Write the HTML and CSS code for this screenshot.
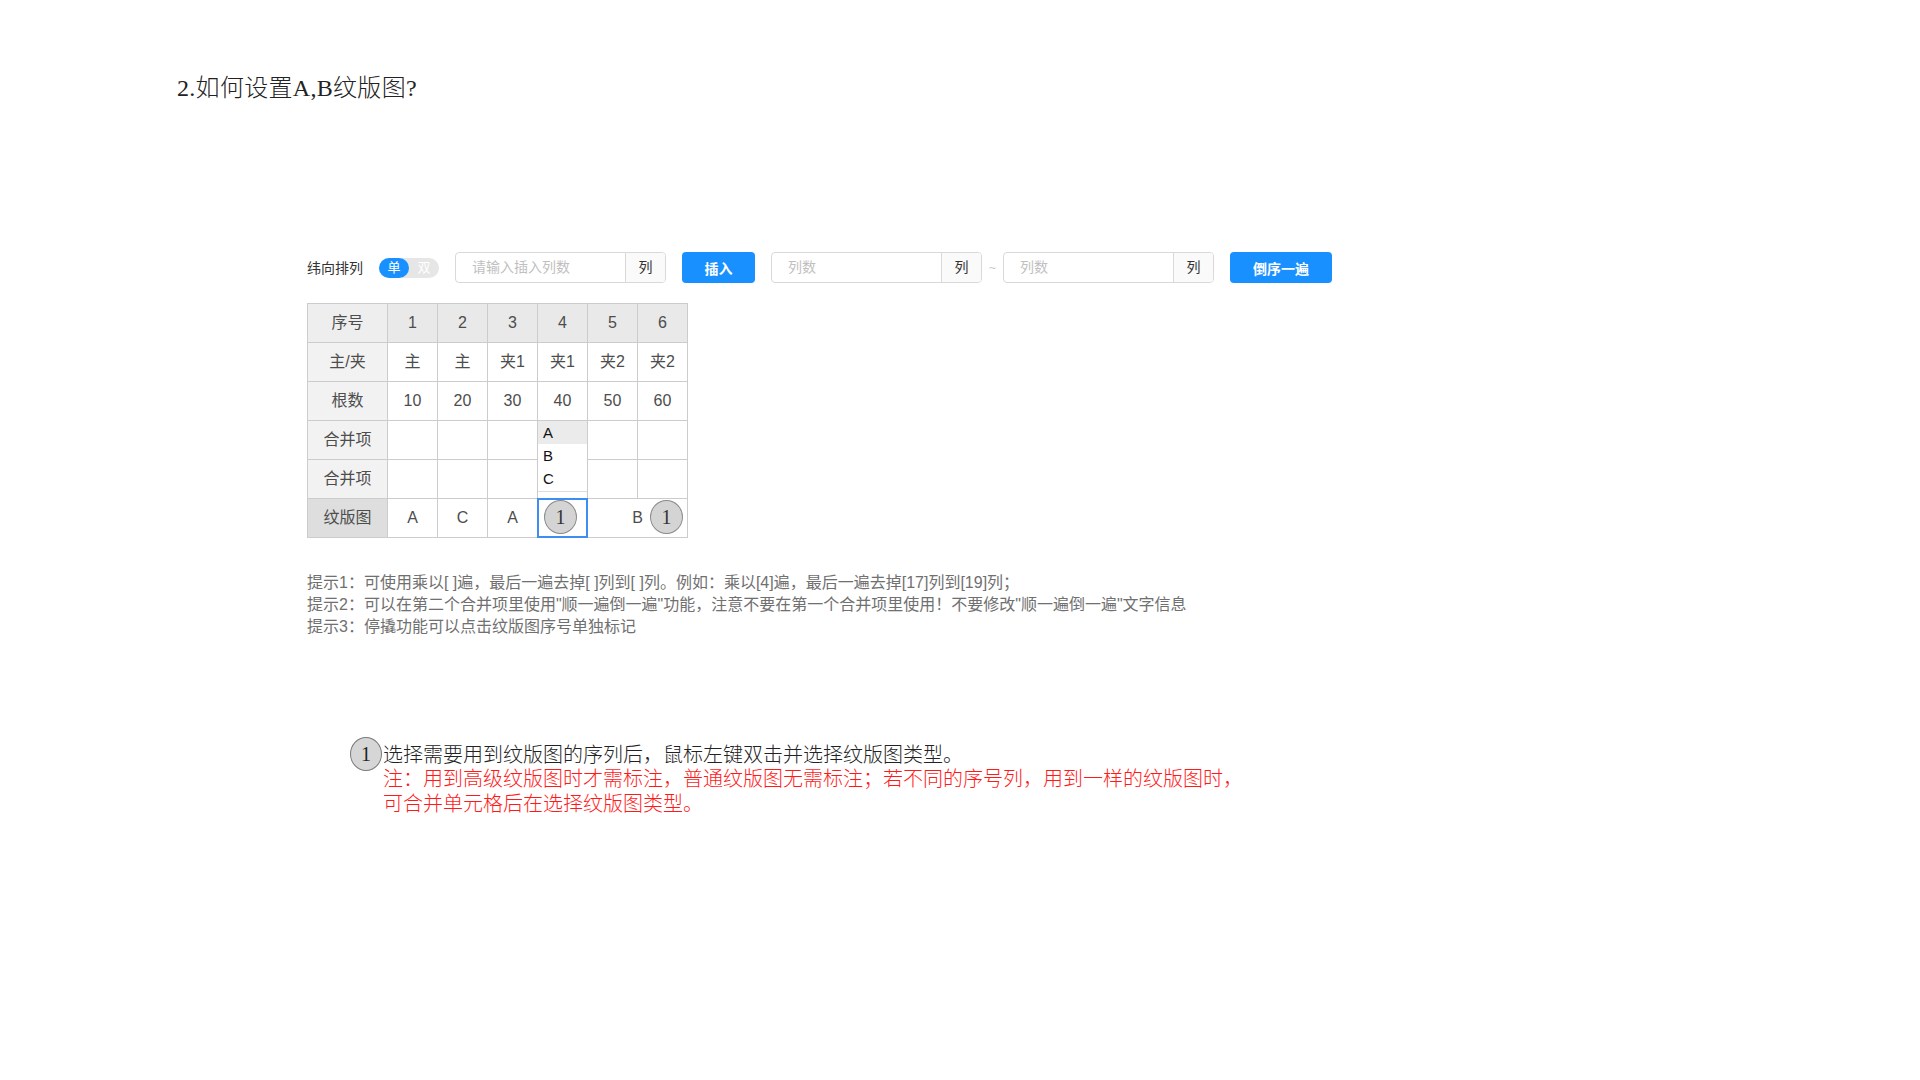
FILE: index.html
```html
<!DOCTYPE html>
<html lang="zh-CN">
<head>
<meta charset="utf-8">
<title>如何设置A,B纹版图</title>
<link rel="stylesheet" href="styles.css">
</head>
<body>
<h1 class="title">2.如何设置A,B纹版图?</h1>

<section class="panel">
  <div class="toolbar">
    <span class="tb-label">纬向排列</span>
    <div class="switch">
      <span class="switch-on">单</span>
      <span class="switch-off">双</span>
    </div>
    <div class="input-group">
      <span class="input-field">请输入插入列数</span>
      <span class="input-suffix">列</span>
    </div>
    <button class="btn">插入</button>
    <div class="range">
      <div class="input-group">
        <span class="input-field">列数</span>
        <span class="input-suffix">列</span>
      </div>
      <span class="tilde">~</span>
      <div class="input-group">
        <span class="input-field">列数</span>
        <span class="input-suffix">列</span>
      </div>
    </div>
    <button class="btn btn-wide">倒序一遍</button>
  </div>

  <table class="grid">
    <colgroup>
      <col class="col-label"><col class="col-data"><col class="col-data"><col class="col-data"><col class="col-data"><col class="col-data"><col class="col-data">
    </colgroup>
    <tr class="row-head">
      <th class="label">序号</th><th>1</th><th>2</th><th>3</th><th>4</th><th>5</th><th>6</th>
    </tr>
    <tr>
      <th class="label">主/夹</th><td>主</td><td>主</td><td>夹1</td><td>夹1</td><td>夹2</td><td>夹2</td>
    </tr>
    <tr>
      <th class="label">根数</th><td>10</td><td>20</td><td>30</td><td>40</td><td>50</td><td>60</td>
    </tr>
    <tr>
      <th class="label">合并项</th><td></td><td></td><td></td>
      <td class="has-menu">
        <div class="menu">
          <div class="menu-item active">A</div>
          <div class="menu-item">B</div>
          <div class="menu-item">C</div>
        </div>
      </td>
      <td></td><td></td>
    </tr>
    <tr>
      <th class="label">合并项</th><td></td><td></td><td></td><td></td><td></td><td></td>
    </tr>
    <tr>
      <th class="label label-dark">纹版图</th><td>A</td><td>C</td><td>A</td>
      <td class="selected"><span class="mark mark-left">1</span></td>
      <td colspan="2" class="merged">B<span class="mark mark-right">1</span></td>
    </tr>
  </table>

  <div class="hints">
    <p>提示1：可使用乘以[ ]遍，最后一遍去掉[ ]列到[ ]列。例如：乘以[4]遍，最后一遍去掉[17]列到[19]列；</p>
    <p>提示2：可以在第二个合并项里使用"顺一遍倒一遍"功能，注意不要在第一个合并项里使用！不要修改"顺一遍倒一遍"文字信息</p>
    <p>提示3：停撬功能可以点击纹版图序号单独标记</p>
  </div>
</section>

<section class="note">
  <span class="note-mark">1</span>
  <div class="note-text">
    <p class="note-main">选择需要用到纹版图的序列后，鼠标左键双击并选择纹版图类型。</p>
    <p class="note-red">注：用到高级纹版图时才需标注，普通纹版图无需标注；若不同的序号列，用到一样的纹版图时，</p>
    <p class="note-red">可合并单元格后在选择纹版图类型。</p>
  </div>
</section>
</body>
</html>
```

FILE: styles.css
```css
html, body {
  margin: 0;
  padding: 0;
  background: #ffffff;
}

body {
  font-family: "Liberation Sans", "Noto Sans CJK SC", sans-serif;
  color: #333;
}

p { margin: 0; }

.title {
  margin: 0;
  padding: 72px 0 0 177px;
  font-family: "Liberation Serif", "Noto Sans CJK SC", serif;
  font-weight: 300;
  font-size: 24px;
  letter-spacing: 0.3px;
  line-height: 32px;
  color: #222;
}

.panel {
  margin: 148px 0 0 307px;
}

/* toolbar */
.toolbar {
  display: flex;
  align-items: center;
  gap: 16px;
  height: 31px;
}

.tb-label {
  font-size: 14px;
  color: #333;
  width: 56px;
  white-space: nowrap;
  padding-bottom: 1px;
}

.switch {
  display: flex;
  width: 60px;
  height: 20px;
  border-radius: 10px;
  background: #e6e6e6;
  font-size: 13px;
  line-height: 20px;
  color: #fff;
}

.switch-on {
  width: 30px;
  border-radius: 10px;
  background: #1890ff;
  text-align: center;
}

.switch-off {
  flex: 1;
  text-align: center;
}

.input-group {
  display: flex;
  width: 211px;
  height: 31px;
  box-sizing: border-box;
  border: 1px solid #d9d9d9;
  border-radius: 4px;
  overflow: hidden;
  font-size: 14px;
}

.input-field {
  flex: 1;
  padding-left: 16px;
  line-height: 29px;
  color: #bfbfbf;
}

.input-suffix {
  width: 39px;
  border-left: 1px solid #d9d9d9;
  background: #fafafa;
  text-align: center;
  line-height: 29px;
  color: #333;
}

.btn {
  width: 73px;
  height: 31px;
  border: none;
  border-radius: 4px;
  background: #1890ff;
  color: #fff;
  font-family: "Liberation Sans", "Noto Sans CJK SC", sans-serif;
  font-size: 14px;
  font-weight: 600;
  padding: 0;
}

.btn-wide {
  width: 102px;
}

.range {
  display: flex;
  align-items: center;
}

.tilde {
  width: 21px;
  text-align: center;
  font-size: 12px;
  color: #c8c8c8;
}

/* table */
.grid {
  margin-top: 20px;
  border-collapse: collapse;
  table-layout: fixed;
  width: 380px;
  font-size: 16px;
  color: #4d4d4d;
}

.col-label { width: 80px; }
.col-data { width: 50px; }

.grid tr { height: 39px; }

.grid th,
.grid td {
  border: 1px solid #cccccc;
  padding: 0 0 1px;
  text-align: center;
  font-weight: normal;
  position: relative;
  line-height: 22px;
}

.grid th.label {
  background: #f2f2f2;
}

.row-head th {
  background: #e9e9e9;
}

.row-head th.label {
  background: #eeeeee;
}

.grid th.label-dark {
  background: #dedede;
}

.menu {
  position: absolute;
  top: 0;
  left: 0;
  right: 0;
  z-index: 2;
  background: #fff;
  border-bottom: 1px solid #dddddd;
  padding-bottom: 1px;
}

.menu-item {
  height: 23px;
  line-height: 23px;
  padding-left: 5px;
  text-align: left;
  font-size: 15px;
  color: #111;
}

.menu-item.active {
  background: #ebebeb;
}

.selected::after {
  content: "";
  position: absolute;
  left: -1px;
  top: -1px;
  right: -1px;
  bottom: -1px;
  border: 2px solid #3d8ef0;
}

.mark {
  position: absolute;
  top: 1px;
  width: 31px;
  height: 32px;
  border: 1px solid #8a8a8a;
  border-radius: 50%;
  background: #d4d4d4;
  font-family: "Liberation Serif", serif;
  font-size: 20px;
  line-height: 32px;
  color: #333;
  text-align: center;
}

.mark-left {
  left: 6px;
}

.mark-right {
  right: 4px;
}

/* hints */
.hints {
  margin-top: 34px;
  font-size: 16px;
  line-height: 22px;
  color: #707070;
}

/* note */
.note {
  display: flex;
  margin: 99px 0 0 350px;
}

.note-mark {
  width: 30px;
  height: 32px;
  border: 1px solid #7a7a7a;
  border-radius: 50%;
  background: #d6d6d6;
  font-family: "Liberation Serif", serif;
  font-size: 20px;
  line-height: 32px;
  text-align: center;
  color: #222;
  flex-shrink: 0;
}

.note-text {
  margin-left: 1px;
  padding-top: 6px;
  font-family: "Liberation Serif", "Noto Sans CJK SC", serif;
  font-weight: 300;
  font-size: 20px;
}

.note-main {
  line-height: 24px;
  color: #222;
}

.note-red {
  line-height: 24.5px;
  color: #ff1a1a;
}
```
